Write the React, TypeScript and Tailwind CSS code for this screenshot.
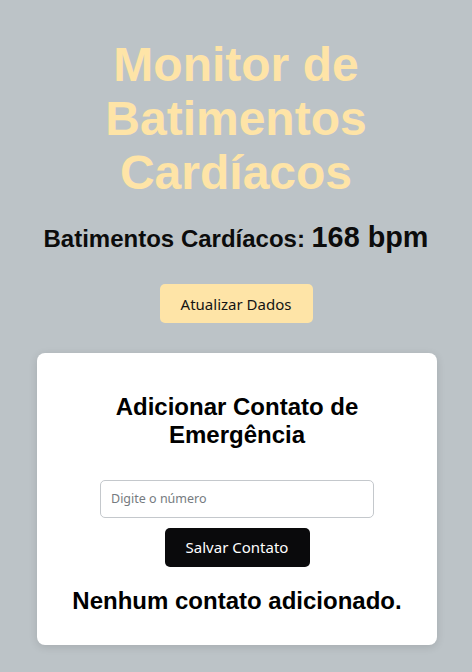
import React from "react";

export default function App() {
  return (
    <div className="min-h-[672px] w-full bg-[#bcc3c7] flex flex-col items-center" style={{ fontFamily: '"Liberation Sans", Arial, sans-serif' }}>
      <h1 className="mt-[38px] w-[300px] text-center text-[48px] leading-[1.12] font-bold text-[#fee4a7]">
        Monitor de Batimentos Cardíacos
      </h1>
      <h2 className="mt-[22px] text-[24px] font-bold text-[#0c0c0c] leading-[1.15]">
        Batimentos Cardíacos: <span className="text-[28.8px]">168 bpm</span>
      </h2>
      <button
        className="mt-[30px] w-[153px] h-[39px] rounded-[5px] bg-[#fee4a7] text-[15px] text-[#141414]"
        style={{ fontFamily: '"Noto Sans", "Open Sans", sans-serif' }}
      >
        Atualizar Dados
      </button>
      <div className="mt-[30px] ml-[2px] w-[400px] rounded-[8px] bg-white shadow-[0_2px_8px_rgba(0,0,0,0.12)] flex flex-col items-center pt-[40px] pb-[31px]">
        <h3 className="w-[280px] text-center text-[24px] font-bold leading-[1.15] text-black">
          Adicionar Contato de Emergência
        </h3>
        <input
          placeholder="Digite o número"
          className="mt-[31px] w-[274px] h-[38px] rounded-[5px] border border-[#c4c8cc] px-[10px] text-[12.5px] placeholder:text-[#767b80] outline-none"
          style={{ fontFamily: '"Noto Sans", "Open Sans", sans-serif' }}
        />
        <button
          className="mt-[10px] w-[145px] h-[39px] rounded-[5px] bg-[#0a0a0c] text-[15px] text-white"
          style={{ fontFamily: '"Noto Sans", "Open Sans", sans-serif' }}
        >
          Salvar Contato
        </button>
        <p className="mt-[20px] text-[24px] font-bold leading-[1.15] text-black">Nenhum contato adicionado.</p>
      </div>
    </div>
  );
}
